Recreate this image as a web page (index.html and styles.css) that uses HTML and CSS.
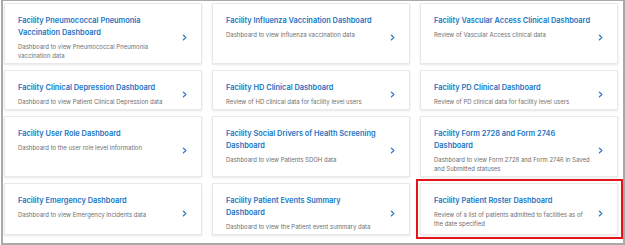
FILE: index.html
```html
<!DOCTYPE html>
<html lang="en">
<head>
<meta charset="utf-8">
<title>Facility Dashboards</title>
<link rel="stylesheet" href="styles.css">
</head>
<body>
<div class="frame">
  <div class="grid">
    <a class="card" href="#">
      <div class="text">
        <div class="title">Facility Pneumococcal Pneumonia Vaccination Dashboard</div>
        <div class="desc">Dashboard to view Pneumococcal Pneumonia vaccination data</div>
      </div>
      <svg class="chev" viewBox="0 0 6 8"><polyline points="1.6,1.2 4.6,4 1.6,6.8"/></svg>
    </a>
    <a class="card" href="#">
      <div class="text">
        <div class="title">Facility Influenza Vaccination Dashboard</div>
        <div class="desc">Dashboard to view influenza vaccination data</div>
      </div>
      <svg class="chev" viewBox="0 0 6 8"><polyline points="1.6,1.2 4.6,4 1.6,6.8"/></svg>
    </a>
    <a class="card" href="#">
      <div class="text">
        <div class="title">Facility Vascular Access Clinical Dashboard</div>
        <div class="desc">Review of Vascular Access clinical data</div>
      </div>
      <svg class="chev" viewBox="0 0 6 8"><polyline points="1.6,1.2 4.6,4 1.6,6.8"/></svg>
    </a>

    <a class="card" href="#">
      <div class="text">
        <div class="title">Facility Clinical Depression Dashboard</div>
        <div class="desc">Dashboard to view Patient Clinical Depression data</div>
      </div>
      <svg class="chev" viewBox="0 0 6 8"><polyline points="1.6,1.2 4.6,4 1.6,6.8"/></svg>
    </a>
    <a class="card" href="#">
      <div class="text">
        <div class="title">Facility HD Clinical Dashboard</div>
        <div class="desc">Review of HD clinical data for facility level users</div>
      </div>
      <svg class="chev" viewBox="0 0 6 8"><polyline points="1.6,1.2 4.6,4 1.6,6.8"/></svg>
    </a>
    <a class="card" href="#">
      <div class="text">
        <div class="title">Facility PD Clinical Dashboard</div>
        <div class="desc">Review of PD clinical data for facility level users</div>
      </div>
      <svg class="chev" viewBox="0 0 6 8"><polyline points="1.6,1.2 4.6,4 1.6,6.8"/></svg>
    </a>

    <a class="card" href="#">
      <div class="text">
        <div class="title">Facility User Role Dashboard</div>
        <div class="desc">Dashboard to the user role level information</div>
      </div>
      <svg class="chev" viewBox="0 0 6 8"><polyline points="1.6,1.2 4.6,4 1.6,6.8"/></svg>
    </a>
    <a class="card" href="#">
      <div class="text">
        <div class="title">Facility Social Drivers of Health Screening Dashboard</div>
        <div class="desc">Dashboard to view Patients SDOH data</div>
      </div>
      <svg class="chev" viewBox="0 0 6 8"><polyline points="1.6,1.2 4.6,4 1.6,6.8"/></svg>
    </a>
    <a class="card" href="#">
      <div class="text">
        <div class="title">Facility Form 2728 and Form 2746 Dashboard</div>
        <div class="desc">Dashboard to view Form 2728 and Form 2746 in Saved and Submitted statuses</div>
      </div>
      <svg class="chev" viewBox="0 0 6 8"><polyline points="1.6,1.2 4.6,4 1.6,6.8"/></svg>
    </a>

    <a class="card" href="#">
      <div class="text">
        <div class="title">Facility Emergency Dashboard</div>
        <div class="desc">Dashboard to view Emergency Incidents data</div>
      </div>
      <svg class="chev" viewBox="0 0 6 8"><polyline points="1.6,1.2 4.6,4 1.6,6.8"/></svg>
    </a>
    <a class="card" href="#">
      <div class="text">
        <div class="title">Facility Patient Events Summary<br>Dashboard</div>
        <div class="desc">Dashboard to view the Patient event summary data</div>
      </div>
      <svg class="chev" viewBox="0 0 6 8"><polyline points="1.6,1.2 4.6,4 1.6,6.8"/></svg>
    </a>
    <a class="card card-highlight" href="#">
      <div class="text">
        <div class="title">Facility Patient Roster Dashboard</div>
        <div class="desc">Review of a list of patients admitted to facilities as of<br>the date specified</div>
      </div>
      <svg class="chev" viewBox="0 0 6 8"><polyline points="1.6,1.2 4.6,4 1.6,6.8"/></svg>
    </a>
  </div>
</div>
</body>
</html>
```

FILE: styles.css
```css
html, body {
  margin: 0;
  padding: 0;
  background: #ffffff;
}

body {
  font-family: Inter, "Noto Sans", "Liberation Sans", sans-serif;
}

.frame {
  box-sizing: border-box;
  width: 624px;
  height: 245px;
  margin-left: 1px;
  border: 2px solid #a9a9a9;
  border-top-width: 1px;
  padding: 2px 5px 0 1px;
  background: #ffffff;
}

.grid {
  display: grid;
  grid-template-columns: repeat(3, 1fr);
  column-gap: 10px;
  row-gap: 6px;
}

.card {
  position: relative;
  display: flex;
  align-items: center;
  gap: 5px;
  padding: 11px 14px 3px 13px;
  background: #ffffff;
  border: 1px solid #e9e9e9;
  box-shadow: 0 1px 2px rgba(0, 0, 0, 0.10);
  text-decoration: none;
}

.text {
  flex: 1;
  min-width: 0;
  align-self: flex-start;
}

.title {
  font-size: 7.4px;
  line-height: 12px;
  font-weight: 600;
  color: #2175c3;
}

.desc {
  margin-top: 3px;
  font-size: 6px;
  line-height: 9px;
  color: #6f6f6f;
}

.chev {
  flex: none;
  width: 5px;
  height: 7px;
  fill: none;
  stroke: #2175c3;
  stroke-width: 1.5;
  stroke-linecap: round;
  stroke-linejoin: round;
}

.card-highlight::after {
  content: "";
  position: absolute;
  left: -5px;
  right: -6px;
  top: -5px;
  bottom: -5px;
  border: 2px solid #e3141b;
  pointer-events: none;
}
```
